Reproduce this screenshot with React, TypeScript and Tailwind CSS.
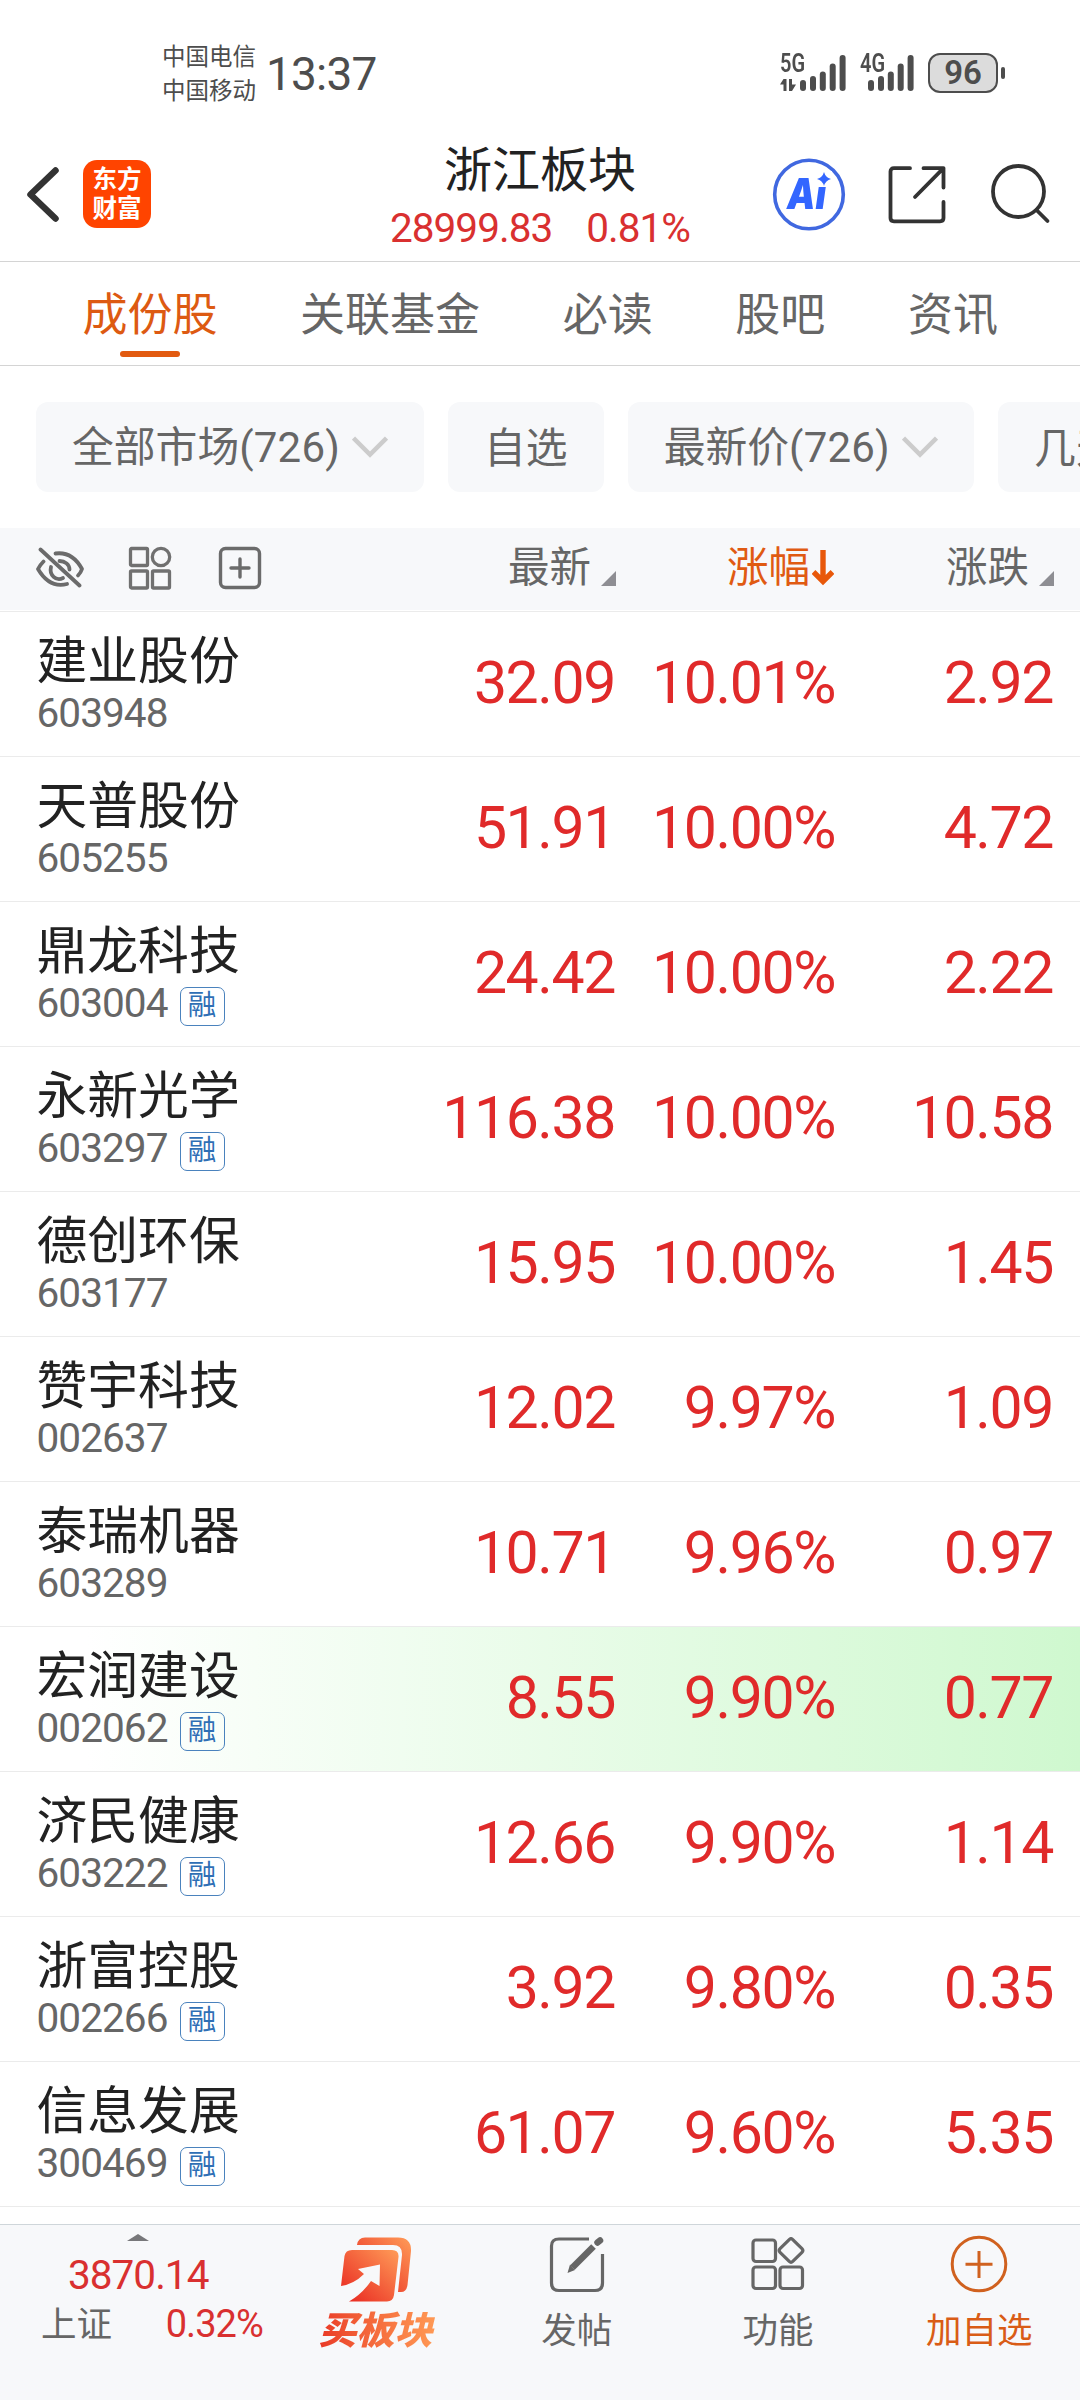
import React from 'react';

interface Stock {
  name: string;
  code: string;
  margin?: boolean;
  price: string;
  percent: string;
  change: string;
  flash?: boolean;
}

const stocks: Stock[] = [
  { name: '建业股份', code: '603948', price: '32.09', percent: '10.01%', change: '2.92' },
  { name: '天普股份', code: '605255', price: '51.91', percent: '10.00%', change: '4.72' },
  { name: '鼎龙科技', code: '603004', margin: true, price: '24.42', percent: '10.00%', change: '2.22' },
  { name: '永新光学', code: '603297', margin: true, price: '116.38', percent: '10.00%', change: '10.58' },
  { name: '德创环保', code: '603177', price: '15.95', percent: '10.00%', change: '1.45' },
  { name: '赞宇科技', code: '002637', price: '12.02', percent: '9.97%', change: '1.09' },
  { name: '泰瑞机器', code: '603289', price: '10.71', percent: '9.96%', change: '0.97' },
  { name: '宏润建设', code: '002062', margin: true, price: '8.55', percent: '9.90%', change: '0.77', flash: true },
  { name: '济民健康', code: '603222', margin: true, price: '12.66', percent: '9.90%', change: '1.14' },
  { name: '浙富控股', code: '002266', margin: true, price: '3.92', percent: '9.80%', change: '0.35' },
  { name: '信息发展', code: '300469', margin: true, price: '61.07', percent: '9.60%', change: '5.35' },
];

const tabs = ['成份股', '关联基金', '必读', '股吧', '资讯'];

const Num: React.FC<{ value: string }> = ({ value }) => (
  <span className="whitespace-nowrap font-[Roboto,sans-serif] tracking-[-0.024em]">{value}</span>
);

const SignalBars: React.FC = () => (
  <svg width="46" height="36" viewBox="0 0 46 36" fill="#4d4d4d">
    <rect x="0" y="25" width="6" height="11" rx="3" />
    <rect x="10" y="21" width="6" height="15" rx="3" />
    <rect x="19.8" y="16.5" width="6" height="19.5" rx="3" />
    <rect x="29.7" y="8.5" width="6" height="27.5" rx="3" />
    <rect x="39.6" y="0" width="6" height="36" rx="3" />
  </svg>
);

const StatusBar: React.FC = () => (
  <div className="flex h-[124px] items-start justify-between pl-[162px] pr-[75px] text-[#4d4d4d]">
    <div className="flex items-start">
      <div className="pt-[38px] text-[23.5px] leading-[34px]">
        <div>中国电信</div>
        <div>中国移动</div>
      </div>
      <div className="ml-[10px] pt-[47px] font-[Roboto,sans-serif] text-[46px] leading-[54px] tracking-[-0.8px]">13:37</div>
    </div>
    <div className="flex items-start pt-[53px]">
      <div className="relative mt-[2px] flex w-[66px] justify-end">
        <span className="absolute top-[-1px] left-0 origin-left scale-x-[0.8] font-[Roboto,sans-serif] text-[25px] leading-[20px] font-semibold">5G</span>
        <svg className="absolute top-[24px] left-0" width="16" height="12" viewBox="0 0 16 12" fill="#4d4d4d">
          <path d="M3.5 0H6.5V12H3.5V5.5H0ZM9 0H12V5.5H16L12 12H9Z" />
        </svg>
        <SignalBars />
      </div>
      <div className="relative mt-[2px] ml-[14px] flex w-[54px] justify-end">
        <span className="absolute top-[-1px] left-0 origin-left scale-x-[0.8] font-[Roboto,sans-serif] text-[25px] leading-[20px] font-semibold">4G</span>
        <SignalBars />
      </div>
      <div className="ml-[14px] flex h-[40px] w-[70px] items-center justify-center rounded-[12px] border-[2.5px] border-[#4d4d4d] bg-[#dcdcdc] font-[Roboto,sans-serif] text-[33px] leading-[32px] font-semibold">
        96
      </div>
      <div className="mt-[14px] ml-[3px] h-[12px] w-[4px] rounded-full bg-[#4d4d4d]" />
    </div>
  </div>
);

const Header: React.FC = () => (
  <header className="flex h-[137px] items-start justify-between">
    <div className="flex w-[380px] items-start pt-[36px]">
      <svg className="mt-[6px] ml-[24px]" width="38" height="58" viewBox="0 0 38 58" fill="none" stroke="#333" strokeWidth="6.5" strokeLinecap="round" strokeLinejoin="round">
        <path d="M31.5 4.5L6.5 28.5L31.5 52.5" />
      </svg>
      <div className="ml-[21px] flex h-[68px] w-[68px] flex-col items-center justify-center rounded-[14px] bg-[#ff4400] text-[24.5px] leading-[29px] font-bold text-white">
        <span className="-mt-[4px]">东方</span>
        <span>财富</span>
      </div>
    </div>
    <div className="flex flex-col items-center">
      <h1 className="mt-[14px] text-[48px] leading-[56px] text-[#222]">浙江板块</h1>
      <div className="mt-[8px] flex gap-[34px] text-[40.5px] leading-[52px] text-[#d93030]">
        <Num value="28999.83" />
        <Num value="0.81%" />
      </div>
    </div>
    <div className="flex w-[380px] justify-end pt-[34px] pr-[29px]">
      <div className="relative h-[74px] w-[74px]">
        <svg width="74" height="74" viewBox="0 0 74 74">
          <circle cx="37" cy="36.5" r="34.3" fill="none" stroke="#4068e0" strokeWidth="3.6" />
        </svg>
        <span className="absolute top-[14px] left-[15px] origin-left scale-x-[0.85] font-[Inter,sans-serif] text-[42px] leading-[44px] font-black text-[#3366ff] italic">Ai</span>
        <svg className="absolute top-[13px] left-[43px]" width="17" height="16" viewBox="0 0 17 16">
          <rect width="17" height="16" fill="#fff" />
          <path d="M9 1Q10.5 6.5 16 8Q10.5 9.5 9 15Q7.5 9.5 2 8Q7.5 6.5 9 1Z" fill="#3366ff" />
        </svg>
      </div>
      <svg className="mt-[7px] ml-[41px]" width="60" height="60" viewBox="0 0 60 60" fill="none" stroke="#333" strokeWidth="3.8" strokeLinecap="round" strokeLinejoin="round">
        <path d="M23 3.2H7Q3.5 3.2 3.5 6.5V53Q3.5 56.3 7 56.3H53Q56.5 56.3 56.5 53V37" />
        <path d="M36.5 3.2H56.5V22.5M56.5 3.2L28 32" />
      </svg>
      <svg className="mt-[5px] ml-[42px]" width="62" height="62" viewBox="0 0 62 62" fill="none" stroke="#333" strokeWidth="3.8" strokeLinecap="round">
        <circle cx="29.5" cy="28.5" r="25.5" />
        <path d="M47.5 47L58.5 58" />
      </svg>
    </div>
  </header>
);

const Tabs: React.FC = () => (
  <nav className="flex h-[105px] gap-[82.6px] border-y border-[#d4d4d4] pl-[82.5px] text-[45px] leading-[56px] text-[#666]">
    {tabs.map((tab, i) => (
      <div key={tab} className={i === 0 ? 'flex flex-col items-center pt-[22px] text-[#dd5a12]' : 'pt-[22px]'}>
        {tab}
        {i === 0 && <div className="mt-[11px] h-[6px] w-[60px] rounded-full bg-[#e25a10]" />}
      </div>
    ))}
  </nav>
);

const Chip: React.FC<{ label: string; count?: number }> = ({ label, count }) => (
  <div className="flex h-[90px] shrink-0 items-center gap-[12px] rounded-[12px] bg-[#f7f8fa] px-[36px] text-[41.8px] leading-[56px] text-[#666]">
    <span className={count ? '-mt-[3px] whitespace-nowrap' : '-mt-[5px] whitespace-nowrap'}>
      {label}
      {count && <span className="font-[Roboto,sans-serif] text-[42px] tracking-[0.2px]">({count})</span>}
    </span>
    {count && (
      <svg width="36" height="22" viewBox="0 0 36 22" fill="none" stroke="#ccc" strokeWidth="4.5">
        <path d="M1.5 2L18 18.5L34.5 2" />
      </svg>
    )}
  </div>
);

const SortMark: React.FC = () => (
  <svg className="mt-[19px] ml-[10px]" width="15" height="15" viewBox="0 0 15 15" fill="#8e8e93">
    <path d="M15 0V15H0Z" />
  </svg>
);

const TableHead: React.FC = () => (
  <div className="flex h-[82px] items-center bg-[#f7f8fa] pr-[26px] text-[41.5px] leading-[50px] text-[#666]">
    <div className="flex flex-1 items-center pb-[2px] pl-[35px]">
      <svg width="50" height="42" viewBox="0 0 50 42" fill="none" stroke="#6b6b6b" strokeWidth="3.8" strokeLinecap="round" strokeLinejoin="round">
        <path d="M5.5 2.5L44.5 38.5" />
        <path d="M20.5 6.5C32 5 41 11 47 22C46 25 44.5 27 43 28.5" />
        <path d="M8.5 14.5C6 17 4.5 19 3 22C10 34 20 40 32 37" />
        <path d="M24.5 14C30 14 34.5 17.5 34.5 22.5" />
        <path d="M16 20C14 28 21 34.5 28 31" />
      </svg>
      <svg className="ml-[43px]" width="44" height="44" viewBox="0 0 44 44" fill="none" stroke="#707070" strokeWidth="3.3">
        <rect x="2.5" y="2.5" width="17" height="17" rx="1" />
        <circle cx="33" cy="11" r="8.7" />
        <rect x="2.5" y="25" width="17" height="17" rx="1" />
        <rect x="24.5" y="25" width="17" height="17" rx="1" />
      </svg>
      <svg className="ml-[46px]" width="44" height="44" viewBox="0 0 44 44" fill="none" stroke="#6b6b6b" strokeWidth="3.4" strokeLinecap="round">
        <rect x="2.5" y="2.5" width="39" height="39" rx="5" />
        <path d="M22 13V31M13 22H31" />
      </svg>
    </div>
    <div className="flex items-center">
      <span className="-mt-[10px]">最新</span>
      <SortMark />
    </div>
    <div className="flex w-[220px] items-center justify-end text-[#e05a12]">
      <span className="-mt-[10px]">涨幅</span>
      <svg className="-mt-[3px] mr-[2px] ml-[2px]" width="22" height="36" viewBox="0 0 22 36" fill="none" stroke="#e8580a" strokeWidth="5.4">
        <path d="M11 0V31M1.5 22L11 31.5L20.5 22" />
      </svg>
    </div>
    <div className="flex w-[218px] items-center justify-end">
      <span className="-mt-[10px]">涨跌</span>
      <SortMark />
    </div>
  </div>
);

const StockRow: React.FC<{ stock: Stock }> = ({ stock }) => (
  <div
    className={`flex h-[145px] border-t border-[#ebebeb] pr-[26px] ${
      stock.flash ? 'bg-linear-to-r from-white from-8% to-[#cff8cf]' : 'bg-white'
    }`}
  >
    <div className="flex-1 pl-[36.5px]">
      <div className="mt-[14px] text-[50.8px] leading-[62px] text-[#222]">{stock.name}</div>
      <div className="flex items-start text-[40.6px] leading-[46px] text-[#666]">
        <span className="-mt-[1px]"><Num value={stock.code} /></span>
        {stock.margin && (
          <span className="mt-[9px] ml-[12px] flex h-[39px] w-[45px] justify-center rounded-[7px] border-[1.5px] border-[#4a82bd] text-[28.5px] leading-[30px] text-[#2f6fb5]">
            融
          </span>
        )}
      </div>
    </div>
    <div className="flex items-start pt-[31px] text-right text-[59px] leading-[70px] text-[#e02a2a]">
      <div><Num value={stock.price} /></div>
      <div className="w-[220px]"><Num value={stock.percent} /></div>
      <div className="mr-px w-[218px]"><Num value={stock.change} /></div>
    </div>
  </div>
);

const FooterItem: React.FC<{ label: string; className?: string; children: React.ReactNode }> = ({ label, className = '', children }) => (
  <div className="flex flex-1 flex-col items-center pt-[10px] text-[#666]">
    <div className="flex h-[68px] items-start">{children}</div>
    <div className={`text-[35.5px] leading-[50px] ${className}`}>{label}</div>
  </div>
);

const Footer: React.FC = () => (
  <footer className="flex h-[176px] border-t border-[#cfd6da] bg-[#f7f8fa]">
    <div className="w-[275px] pt-[9px]">
      <svg className="ml-[127px]" width="22" height="7" viewBox="0 0 22 7" fill="#77777a">
        <path d="M11 0L22 7H0Z" />
      </svg>
      <div className="mt-[6px] pl-[68px] text-[40.5px] leading-[50px] text-[#d93030]">
        <Num value="3870.14" />
      </div>
      <div className="-mt-[2px] flex items-start justify-between pr-[12px] pl-[41px] leading-[48px]">
        <span className="text-[35.5px] text-[#666]">上证</span>
        <span className="-mt-[1px] text-[38px] text-[#d93030]"><Num value="0.32%" /></span>
      </div>
    </div>
    <FooterItem label="买板块" className="bg-linear-to-r from-[#e83325] to-[#ff9a55] bg-clip-text px-[4px] text-[38px] font-black text-transparent italic">
      <svg className="mt-[2px]" width="72" height="66" viewBox="0 0 72 66">
        <defs>
          <linearGradient id="board" x1="0" y1="1" x2="1" y2="0">
            <stop offset="0.1" stopColor="#ea2f24" />
            <stop offset="1" stopColor="#ff9c58" />
          </linearGradient>
        </defs>
        <path fill="url(#board)" d="M17 8Q18 0.5 25 0.5H58Q71.5 0.5 71 14L67.5 48Q66.5 55 61 55H58L62 18Q62.5 8 53 8Z" />
        <path fill="url(#board)" d="M4.5 19Q5.5 13 12 13H52Q59 13 58.5 20L54 58Q53 64.5 47 64.5H9Q22 57 31 44L39.5 49L40 27.5L18 32L24 37Q14 47 1 49Z" />
      </svg>
    </FooterItem>
    <FooterItem label="发帖">
      <svg className="mt-[1px]" width="56" height="57" viewBox="0 0 56 57" fill="none" stroke="#666" strokeWidth="3.2">
        <path d="M40 3H10Q2.5 3 2.5 10V47Q2.5 54.5 10 54.5H46Q53.5 54.5 53.5 47V18" />
        <path d="M44.5 10.5L23.5 31.5" strokeWidth="6.5" />
        <path d="M26 34L21 28.5L18.5 37Z" fill="#666" stroke="none" />
        <path d="M48.5 6.5L51 4.5" strokeWidth="6.5" strokeLinecap="round" />
      </svg>
    </FooterItem>
    <FooterItem label="功能">
      <svg className="mt-[2px]" width="54" height="54" viewBox="0 0 54 54" fill="none" stroke="#666" strokeWidth="3.2">
        <rect x="2" y="3" width="22.5" height="21.5" rx="3" />
        <rect x="2" y="30" width="22.5" height="21.5" rx="3" />
        <rect x="29" y="30" width="22.5" height="21.5" rx="3" />
        <rect x="31" y="4.5" width="18" height="18" rx="2.5" transform="rotate(45 40 13.5)" />
      </svg>
    </FooterItem>
    <FooterItem label="加自选" className="text-[#d95c16]">
      <svg width="58" height="58" viewBox="0 0 58 58" fill="none" stroke="#d0611f" strokeWidth="3">
        <circle cx="29" cy="29" r="26.8" />
        <path d="M29 16V43M15.5 29.3H42.5" />
      </svg>
    </FooterItem>
  </footer>
);

const App: React.FC = () => {
  return (
    <div className="flex h-[2400px] w-[1080px] flex-col overflow-hidden bg-white font-['Noto_Sans_CJK_SC',sans-serif]">
      <StatusBar />
      <Header />
      <Tabs />
      <div className="flex gap-[24px] overflow-hidden px-[36px] py-[36px]">
        <Chip label="全部市场" count={726} />
        <Chip label="自选" />
        <Chip label="最新价" count={726} />
        <Chip label="几天几板" />
      </div>
      <TableHead />
      <div className="flex-1 pt-px">
        {stocks.map((stock) => (
          <StockRow key={stock.code} stock={stock} />
        ))}
        <div className="border-t border-[#ebebeb]" />
      </div>
      <Footer />
    </div>
  );
};

export default App;
